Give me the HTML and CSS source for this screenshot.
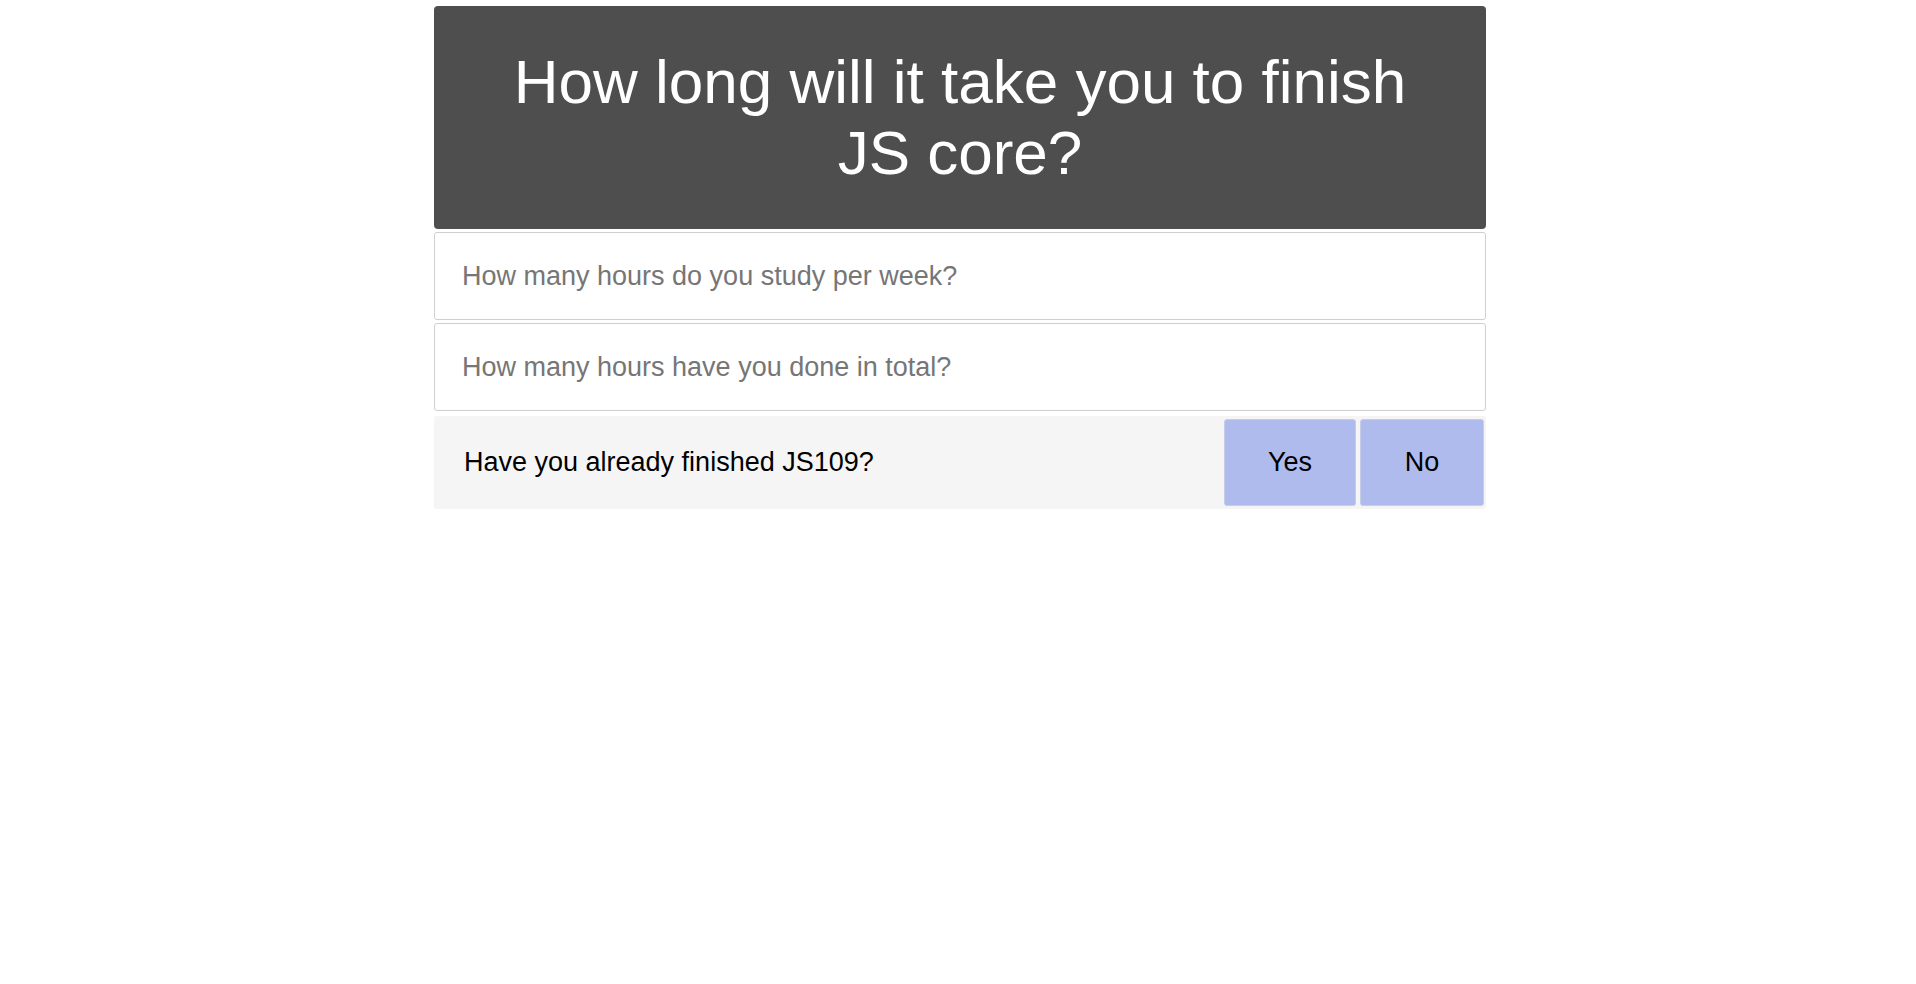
FILE: index.html
```html
<!DOCTYPE html>
<html lang="en">
<head>
<meta charset="utf-8">
<title>JS core estimator</title>
<link rel="stylesheet" href="styles.css">
</head>
<body>
<main class="app">
  <header class="banner">
    <h1 class="banner-title">How long will it take you to finish JS core?</h1>
  </header>
  <input class="field" type="text" placeholder="How many hours do you study per week?">
  <input class="field" type="text" placeholder="How many hours have you done in total?">
  <div class="question">
    <span class="question-label">Have you already finished JS109?</span>
    <div class="choices">
      <button class="choice" type="button">Yes</button>
      <button class="choice" type="button">No</button>
    </div>
  </div>
</main>
</body>
</html>
```
FILE: styles.css
```css
html, body {
  background: #ffffff;
}

body {
  margin: 6px 0 0 4px;
  font-family: "Liberation Sans", Helvetica, Arial, sans-serif;
}

.app {
  width: 1052px;
  margin: 0 auto;
  display: flex;
  flex-direction: column;
}

.banner {
  background: #4e4e4e;
  border-radius: 4px;
  padding: 40px 60px;
  height: 223px;
  box-sizing: border-box;
}

.banner-title {
  margin: 0;
  color: #ffffff;
  font-size: 62px;
  font-weight: normal;
  line-height: normal;
  text-align: center;
}

.field {
  margin-top: 3px;
  height: 88px;
  box-sizing: border-box;
  border: 1px solid #cfcfcf;
  border-radius: 3px;
  padding: 0 27px;
  font-family: inherit;
  font-size: 27px;
  color: #222222;
  background: #ffffff;
  outline: none;
}

.field::placeholder {
  color: #767676;
}

.question {
  margin-top: 5px;
  height: 93px;
  box-sizing: border-box;
  background: #f5f5f5;
  border-radius: 3px;
  padding: 3px 2px 3px 30px;
  display: flex;
  align-items: stretch;
  justify-content: space-between;
}

.question-label {
  align-self: center;
  font-size: 27px;
  color: #000000;
}

.choices {
  display: flex;
  gap: 4px;
}

.choice {
  font-family: inherit;
  font-size: 27px;
  color: #000000;
  background: #aebbec;
  border: 1px solid #c5cde8;
  border-radius: 3px;
  padding: 0;
  cursor: pointer;
}

.choice:first-child {
  width: 132px;
}

.choice:last-child {
  width: 124px;
}
```
